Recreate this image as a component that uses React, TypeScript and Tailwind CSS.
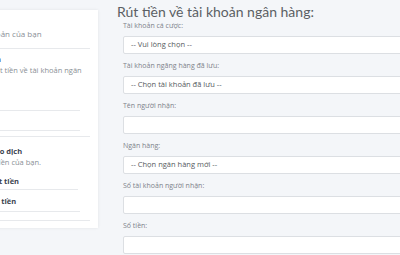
import React from 'react';

const fields = [
  { label: 'Tài khoản cá cược:', value: '-- Vui lòng chọn --' },
  { label: 'Tài khoản ngăng hàng đã lưu:', value: '-- Chọn tài khoản đã lưu --' },
  { label: 'Tên người nhận:', value: '' },
  { label: 'Ngân hàng:', value: '-- Chọn ngân hàng mới --' },
  { label: 'Số tài khoản người nhận:', value: '' },
  { label: 'Số tiền:', value: '' },
];

const App: React.FC = () => {
  return (
    <div className="flex h-[255px] w-[400px] overflow-hidden bg-[#f4f6f9] font-['Open_Sans',sans-serif]">
      {/* Menu tài khoản (bị cắt bên trái) */}
      <aside className="ml-[-100px] mt-[10px] h-[218px] w-[198px] shrink-0 overflow-hidden bg-white pl-[66px] pr-[8px] pt-[18px] shadow-[0_0_3px_rgba(0,0,0,0.08)]">
        <p className="ml-[-28px] whitespace-nowrap text-[8px] leading-[11px] text-[#8a8f96]">Thông tin tài khoản của bạn</p>
        <div className="mt-[9px] border-b border-[#e7e9ec]" />

        <div className="mr-[10px]">
          <p className="ml-[5px] mt-[5px] whitespace-nowrap text-[7.5px] font-bold leading-[11px] text-[#3b4350]">Rút tiền</p>
          <p className="ml-[-3px] w-[120px] text-[7.5px] leading-[11px] text-[#8a8f96]">Yêu cầu rút tiền về tài khoản ngân hàng</p>
          <div className="mt-[23px] border-b border-[#e7e9ec]" />
          <div className="mt-[19px] border-b border-[#e7e9ec]" />
        </div>
        <div className="mt-[5px] border-b border-[#e7e9ec]" />

        <p className="ml-[-6px] mt-[9px] whitespace-nowrap text-[7.5px] font-bold leading-[11px] text-[#3b4350]">Lịch sử giao dịch</p>
        <p className="ml-[-45px] whitespace-nowrap text-[7.5px] leading-[10px] text-[#8a8f96]">Xem lịch sử giao dịch tiền của bạn.</p>
        <p className="mt-[9px] pl-[23px] whitespace-nowrap text-[7.5px] font-bold leading-[11px] text-[#3b4350]">Rút tiền</p>
        <div className="ml-[24px] mr-[12px] mt-[2px] border-b border-[#e7e9ec]" />
        <p className="mt-[6px] pl-[18px] whitespace-nowrap text-[7.5px] font-bold leading-[11px] text-[#3b4350]">Nạp tiền</p>
        <div className="ml-[24px] mr-[10px] mt-[4px] border-b border-[#e7e9ec]" />
        <div className="mt-[8px] border-b border-[#e7e9ec]" />
      </aside>

      {/* Form rút tiền */}
      <main className="flex-1 pl-[19px]">
        <h1 className="mt-[2px] whitespace-nowrap font-['Lato',sans-serif] text-[14px] leading-[19px] text-[#5b5f64]">Rút tiền về tài khoản ngân hàng:</h1>
        <div className="pl-[6px]">
          {fields.map((f, i) => (
            <div key={i} className={i === 0 ? '' : 'mt-[7px]'}>
              <label className="block whitespace-nowrap text-[7px] leading-[10px] text-[#7d828a]">{f.label}</label>
              <div className="mt-[5px] flex h-[18px] w-[300px] items-center rounded-[2px] border border-[#dcdfe3] bg-white px-[7px] text-[7.5px] text-[#555a60]">
                {f.value}
              </div>
            </div>
          ))}
        </div>
      </main>
    </div>
  );
};

export default App;
